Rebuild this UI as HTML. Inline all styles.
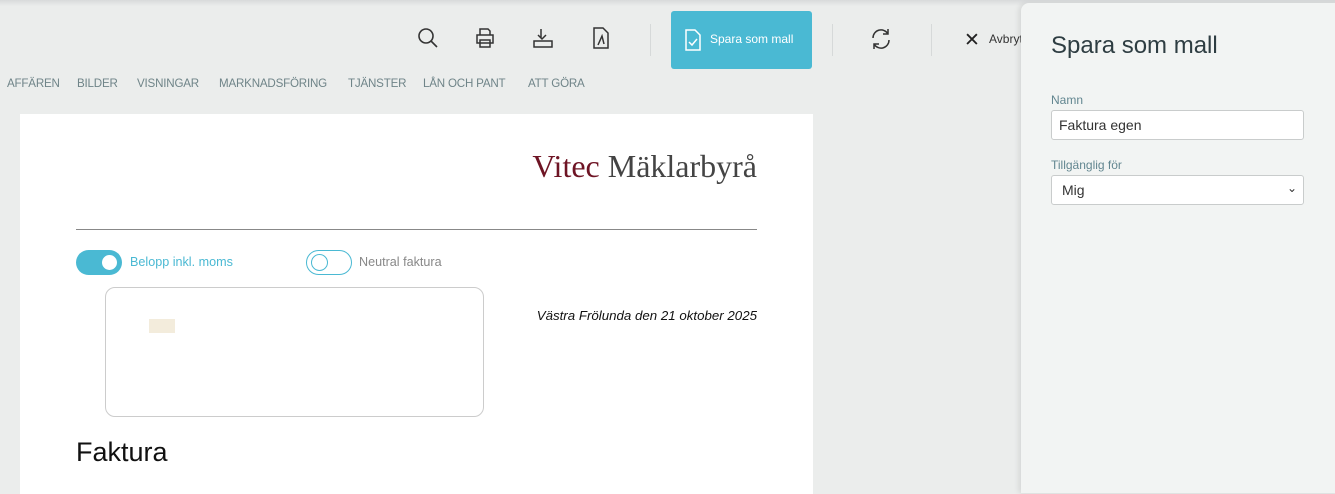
<!DOCTYPE html>
<html><head><meta charset="utf-8"><style>
*{box-sizing:border-box;margin:0;padding:0}
body{width:1335px;height:482px;overflow:hidden;background:#ebedec;font-family:"Liberation Sans",sans-serif;position:relative}
.top{position:absolute;left:0;top:0;width:1335px;height:6px;background:linear-gradient(#d8dadb,#ebedec)}
.ic{position:absolute;top:27px}
.sep{position:absolute;top:24px;width:1px;height:32px;background:#d6d9d9}
.btn{position:absolute;left:671px;top:11px;width:141px;height:58px;background:#4ab9d3;border-radius:3px;color:#fff;font-size:12px}
.nav{position:absolute;top:77px;font-size:11.6px;color:#6f8488;letter-spacing:-.2px}
.page{position:absolute;left:20px;top:114px;width:793px;height:380px;background:#fff}
.panel{position:absolute;left:1021px;top:3px;width:320px;height:490px;background:#f2f4f3;border-radius:8px 0 0 0;box-shadow:-2px 0 6px rgba(0,0,0,.1)}
.lbl{position:absolute;left:30px;font-size:12px;color:#628690}
.inp{position:absolute;left:30px;width:253px;height:30px;background:#fff;border:1px solid #c9cccc;border-radius:3px;font-size:14px;color:#333;padding:6px 7px}
</style></head><body>
<div class="top"></div>
<svg class="ic" style="left:417px" width="22" height="22" viewBox="0 0 22 22" fill="none" stroke="#333" stroke-width="1.6"><circle cx="9" cy="9" r="7"/><path d="M14 14l6 6"/></svg>
<svg class="ic" style="left:474px" width="22" height="22" viewBox="0 0 22 22" fill="none" stroke="#333" stroke-width="1.5"><path d="M6 8V2h8l2 2v4M3 8h16v8H3zM6 13h10v7H6z"/></svg>
<svg class="ic" style="left:532px" width="22" height="22" viewBox="0 0 22 22" fill="none" stroke="#333" stroke-width="1.5"><path d="M9 2v9M6 8l4 4 4-4M2 14h18v6H2z"/></svg>
<svg class="ic" style="left:591px" width="20" height="22" viewBox="0 0 20 22" fill="none" stroke="#333" stroke-width="1.5"><path d="M3 1h9l5 5v15H3zM7 18l4-9 2 8"/></svg>
<div class="sep" style="left:650px"></div>
<div class="btn"><svg style="position:absolute;left:13px;top:18px" width="18" height="22" viewBox="0 0 18 22" fill="none" stroke="#fff" stroke-width="1.5"><path d="M2 1h9l5 5v15H2zM5 13l3 3 5-6"/></svg><span style="position:absolute;left:39px;top:21px">Spara som mall</span></div>
<div class="sep" style="left:832px"></div>
<svg class="ic" style="left:870px" width="22" height="24" viewBox="0 0 22 24" fill="none" stroke="#333" stroke-width="1.5"><path d="M3 11a8 8 0 0 1 15-4M19 13a8 8 0 0 1-15 4M18 2v5h-5M4 22v-5h5"/></svg>
<div class="sep" style="left:931px"></div>
<div style="position:absolute;left:964px;top:29px;font-size:19px;color:#222">✕</div>
<div style="position:absolute;left:989px;top:32px;font-size:12px;color:#333">Avbryt</div>
<div class="nav" style="left:7px">AFFÄREN</div>
<div class="nav" style="left:77px">BILDER</div>
<div class="nav" style="left:137px">VISNINGAR</div>
<div class="nav" style="left:219px">MARKNADSFÖRING</div>
<div class="nav" style="left:348px">TJÄNSTER</div>
<div class="nav" style="left:423px">LÅN OCH PANT</div>
<div class="nav" style="left:528px">ATT GÖRA</div>
<div class="page">
<div style="position:absolute;right:56px;top:34px;font-family:'Liberation Serif',serif;font-size:32px;color:#444"><span style="color:#6e1424">Vitec</span> Mäklarbyrå</div>
<div style="position:absolute;left:56px;top:115px;width:681px;height:1px;background:#888"></div>
<div style="position:absolute;left:56px;top:136px;width:46px;height:25px;border-radius:13px;background:#4ab9d3"><div style="position:absolute;right:5px;top:5px;width:15px;height:15px;border-radius:50%;background:#fff"></div></div>
<div style="position:absolute;left:110px;top:141px;font-size:12.6px;color:#4ab9d3">Belopp inkl. moms</div>
<div style="position:absolute;left:286px;top:136px;width:46px;height:25px;border-radius:13px;border:1px solid #4ab9d3"><div style="position:absolute;left:4px;top:3px;width:17px;height:17px;border-radius:50%;border:1px solid #4ab9d3"></div></div>
<div style="position:absolute;left:339px;top:141px;font-size:12.6px;color:#888">Neutral faktura</div>
<div style="position:absolute;left:85px;top:173px;width:379px;height:130px;border:1px solid #ccc;border-radius:10px"><div style="position:absolute;left:43px;top:31px;width:26px;height:14px;background:#f3ecdc"></div></div>
<div style="position:absolute;right:56px;top:194px;font-size:13.3px;font-style:italic;color:#111">Västra Frölunda den 21 oktober 2025</div>
<div style="position:absolute;left:56px;top:323px;font-size:27px;color:#111">Faktura</div>
</div>
<div class="panel">
<div style="position:absolute;left:30px;top:29px;font-size:24px;color:#2e3d42;font-weight:300">Spara som mall</div>
<div class="lbl" style="top:90px">Namn</div>
<div class="inp" style="top:107px">Faktura egen</div>
<div class="lbl" style="top:155px">Tillgänglig för</div>
<div class="inp" style="top:172px;padding-left:10px">Mig<span style="position:absolute;right:6px;top:5px;font-size:12px">⌄</span></div>
</div>
</body></html>
